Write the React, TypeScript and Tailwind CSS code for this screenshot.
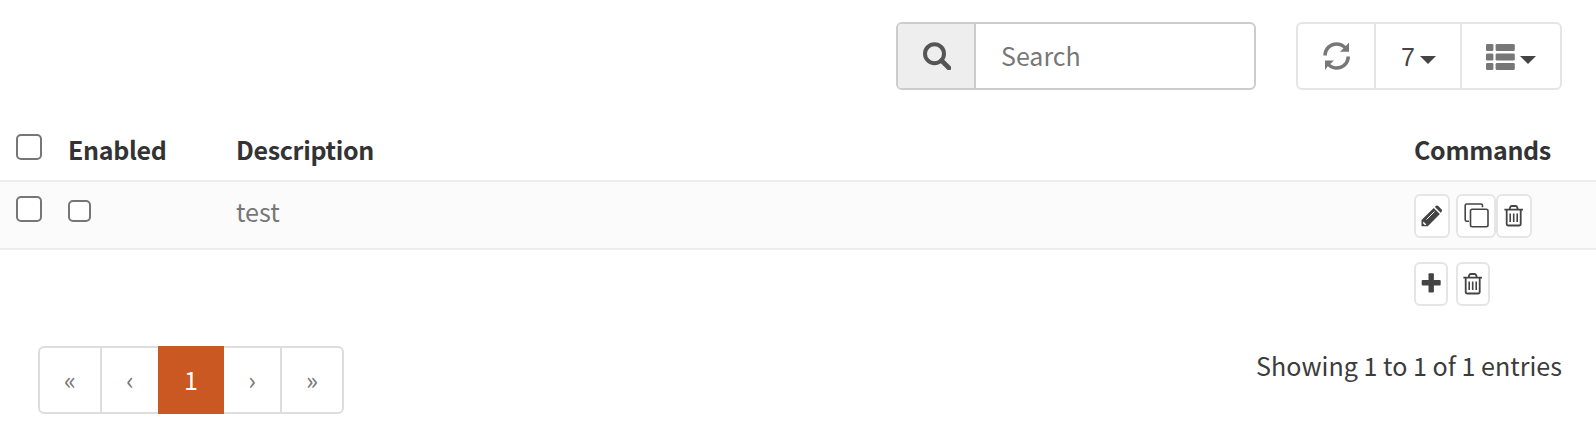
import React from "react";

const Search = () => (
  <svg width="28" height="28" viewBox="0 0 28 28" fill="none" stroke="#555">
    <circle cx="11.5" cy="11.7" r="9.5" strokeWidth="4" />
    <path d="M18.5 18.5L26 26" strokeWidth="4.6" strokeLinecap="round" />
  </svg>
);

const Refresh = () => (
  <svg width="28" height="28" viewBox="0 0 28 28" fill="#777">
    <path d="M0.3 13.6C0.3 5.9 6.2 0.3 13.7 0.3C17.3 0.3 20.5 1.7 22.9 4L26 0.6V9.8H17L20.4 6.4C18.6 4.7 16.3 3.8 13.7 3.8C8.4 3.8 3.9 7.8 3.9 13.6Z" />
    <path d="M27 14.4C27 22.1 21.1 27.7 13.6 27.7C10.2 27.7 7.1 26.4 4.8 24.2L2 28V18.6H11L7.3 21.9C9 23.4 11.2 24.2 13.6 24.2C18.9 24.2 23.4 20.2 23.4 14.4Z" />
  </svg>
);

const List = () => (
  <svg width="29" height="26" viewBox="0 0 29 26" fill="#777">
    {[0, 9.5, 19].map((y) => (
      <React.Fragment key={y}>
        <rect x="0" y={y} width="7.4" height="7" rx="1.3" />
        <rect x="9.6" y={y} width="19.2" height="7" rx="1.3" />
      </React.Fragment>
    ))}
  </svg>
);

const Caret = () => (
  <svg width="16" height="8" viewBox="0 0 16 8" fill="#444">
    <path d="M0 0H16L8 8Z" />
  </svg>
);

const Pencil = () => (
  <svg width="22" height="22" viewBox="0 0 22 22">
    <path d="M0.5 21.3V15L12.7 2.9L18.9 9.1L6.8 21.3Z" fill="#444" />
    <path d="M13.9 1.9L15 0.8Q16.2 0 17.3 1L20.6 4.5Q21.5 5.6 20.6 6.7L19.7 7.7Z" fill="#444" />
    <path d="M5.5 14.5L13.5 6.5" stroke="#fff" strokeWidth="1" />
    <path d="M2.4 16.6L5.4 19.6L4 20.2L2 18.2Z" fill="#fff" />
  </svg>
);

const Copy = () => (
  <svg width="25" height="25" viewBox="0 0 25 25" fill="none" stroke="#444" strokeWidth="1.6">
    <path d="M5 18.2H2.7Q1.2 18.2 1.2 16.7V2.5Q1.2 1 2.7 1H17Q18.5 1 18.5 2.5V4.3" />
    <rect x="6.5" y="6.3" width="17.5" height="17.5" rx="1.7" />
  </svg>
);

const Trash = () => (
  <svg width="20" height="22" viewBox="0 0 20 22" fill="none" stroke="#444" strokeWidth="1.8">
    <path d="M0.4 4.6H19M5.6 4.3L6.3 2Q6.6 1 7.7 1H11.7Q12.8 1 13.1 2L13.800 4.3" />
    <path d="M2.7 5V18.700Q2.7 20.500 4.4 20.500H15Q16.700 20.500 16.700 18.700V5" />
    <path d="M6.2 8.500V17M9.700 8.500V17M13.200 8.500V17" strokeWidth="1.600" />
  </svg>
);

const Plus = () => (
  <svg width="20" height="20" viewBox="0 0 20 20" fill="#444">
    <rect x="7.500" y="0.200" width="5.400" height="19.200" rx="1" />
    <rect x="0.700" y="7.100" width="19" height="5.400" rx="1" />
  </svg>
);

const Check = ({ small = false }: { small?: boolean }) => (
  <input
    type="checkbox"
    className={
      "block shrink-0 appearance-none border-2 border-[#767676] bg-white " +
      (small ? "h-[22px] w-[23px] rounded-[5px]" : "size-[26px] rounded-[5px]")
    }
  />
);

const Cmd = ({ children, className }: { children: React.ReactNode; className: string }) => (
  <button
    className={"flex h-[44px] shrink-0 justify-center rounded-[6px] border-2 border-[#e5e5e5] bg-white " + className}
  >
    {children}
  </button>
);

export default function App() {
  return (
    <div className="h-[442px] w-[1596px] overflow-hidden bg-white pt-[22px] font-['Noto_Sans_CJK_JP',sans-serif] text-[25px] leading-[36px] text-[#3c3c3b]">
      <div className="flex h-[68px] justify-end gap-[40px] pr-[34px]">
        <div className="flex w-[360px] overflow-hidden rounded-[6px] border-2 border-[#ccc]">
          <span className="w-[78px] shrink-0 border-r-2 border-[#ccc] bg-[#eee] pt-[18px] pl-[25px]">
            <Search />
          </span>
          <input
            placeholder="Search"
            className="w-[280px] pb-[2px] pl-[25px] outline-none placeholder:text-[#777]"
          />
        </div>
        <div className="flex w-[266px] rounded-[6px] border-2 border-[#e5e5e5]">
          <button className="flex w-[78px] items-start border-r-2 border-[#e5e5e5] pt-[18px] pl-[25px]">
            <Refresh />
          </button>
          <button className="flex w-[86px] items-start border-r-2 border-[#e5e5e5] pt-[14px] pl-[25px] text-[#444]">
            <span className="mt-px w-[19px] text-left font-['Liberation_Sans',sans-serif]">7</span>
            <span className="mt-[18px]"><Caret /></span>
          </button>
          <button className="flex w-[98px] items-start pl-[24px]">
            <span className="mt-[20px] w-[34px]"><List /></span>
            <span className="mt-[32px]"><Caret /></span>
          </button>
        </div>
      </div>

      <div className="grid h-[92px] grid-cols-[68px_168px_1178px_182px] items-start border-b-2 border-[#ececec] pt-[44px] font-semibold tracking-[-0.33px] text-[#333]">
        <div className="pl-4"><Check /></div>
        <div className="-mt-[3px]">Enabled</div>
        <div className="-mt-[3px]">Description</div>
        <div className="-mt-[3px]">Commands</div>
      </div>
      <div className="grid h-[68px] grid-cols-[68px_168px_1178px_182px] items-start border-b-2 border-[#ececec] bg-[#fbfbfb]">
        <div className="pt-[14px] pl-4"><Check /></div>
        <div className="pt-[18px]"><Check small /></div>
        <div className="pt-[11px] text-[25.2px] text-[#777]">test</div>
        <div className="flex pt-[12px]">
          <Cmd className="mr-[6px] w-[36px] pt-[9px]"><Pencil /></Cmd>
          <Cmd className="w-[40px] pt-[7px]"><Copy /></Cmd>
          <Cmd className="w-[36px] pt-[9px]"><Trash /></Cmd>
        </div>
      </div>
      <div className="flex h-[94px] pt-[12px] pl-[1414px]">
        <Cmd className="mr-[8px] w-[34px] pt-[9px]"><Plus /></Cmd>
        <Cmd className="w-[34px] pt-[9px]"><Trash /></Cmd>
      </div>

      <div className="flex justify-between pr-[34px] pl-[38px]">
        <div className="mt-[2px] flex h-[68px] w-[306px] text-center leading-[62px] text-[#777]">
          <a className="w-[64px] rounded-l-[6px] border-2 border-[#ddd]">«</a>
          <a className="w-[56px] border-y-2 border-[#ddd]">‹</a>
          <a className="w-[66px] bg-[#c95823] leading-[66px] text-white">1</a>
          <a className="w-[56px] border-y-2 border-[#ddd]">›</a>
          <a className="w-[64px] rounded-r-[6px] border-2 border-[#ddd]">»</a>
        </div>
        <div className="mt-[3px] text-[25.1px]">Showing 1 to 1 of 1 entries</div>
      </div>
    </div>
  );
}
